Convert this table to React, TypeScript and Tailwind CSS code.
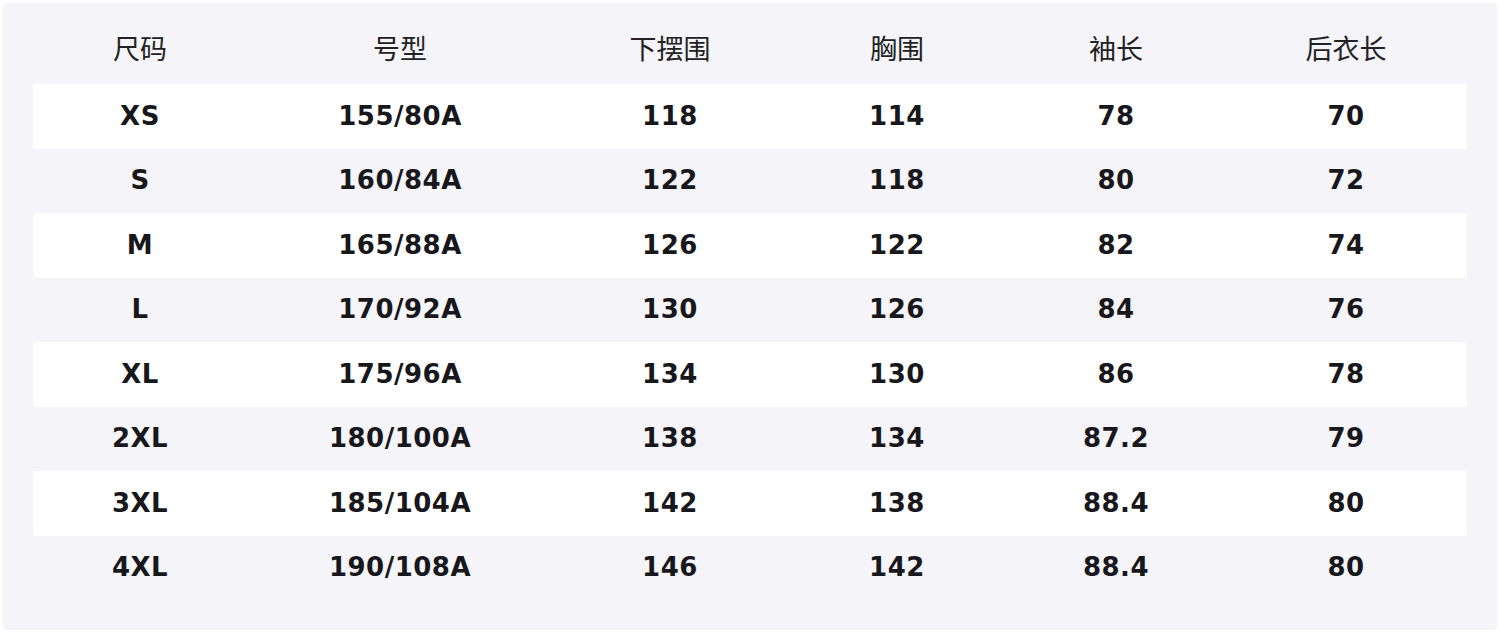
const headers = ['尺码', '号型', '下摆围', '胸围', '袖长', '后衣长'];

const rows: string[][] = [
  ['XS', '155/80A', '118', '114', '78', '70'],
  ['S', '160/84A', '122', '118', '80', '72'],
  ['M', '165/88A', '126', '122', '82', '74'],
  ['L', '170/92A', '130', '126', '84', '76'],
  ['XL', '175/96A', '134', '130', '86', '78'],
  ['2XL', '180/100A', '138', '134', '87.2', '79'],
  ['3XL', '185/104A', '142', '138', '88.4', '80'],
  ['4XL', '190/108A', '146', '142', '88.4', '80'],
];

const cols = 'grid grid-cols-[214px_306px_234px_220px_218px_242px]';

export default function App() {
  return (
    <div className="w-[1500px] h-[633px] bg-white p-[3px]">
      <div className="h-[627px] rounded-[4px] bg-[#f4f4f9] px-[30px] font-['DejaVu_Sans','Noto_Sans_CJK_SC',sans-serif] text-[#18181c]">
        <div className={`${cols} h-[81px] items-center pt-[10px] text-[27px] font-normal text-[#222]`}>
          {headers.map((h) => (
            <div key={h} className="text-center font-['Noto_Sans_CJK_SC',sans-serif]">
              {h}
            </div>
          ))}
        </div>
        {rows.map((r, i) => (
          <div
            key={r[0]}
            className={`${cols} h-[64.5px] items-center rounded-[3px] text-[26px] font-bold tracking-[0.5px] ${
              i % 2 === 0 ? 'bg-white' : ''
            }`}
          >
            {r.map((c, j) => (
              <div key={j} className="text-center">
                {c}
              </div>
            ))}
          </div>
        ))}
      </div>
    </div>
  );
}
